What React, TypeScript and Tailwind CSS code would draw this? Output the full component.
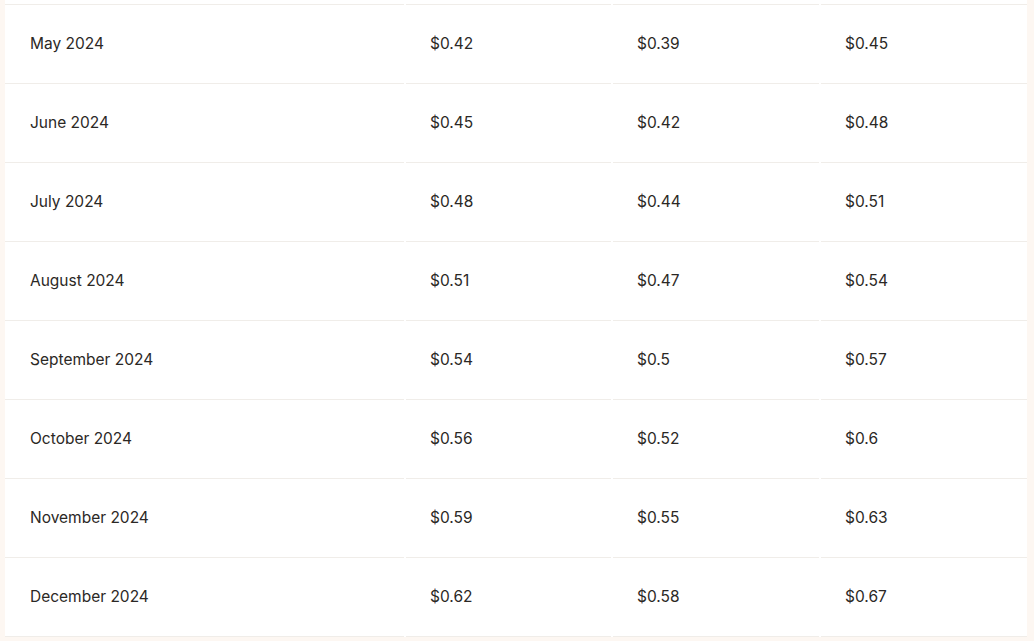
import React from 'react';

interface PriceRow {
  month: string;
  avg: string;
  low: string;
  high: string;
}

const rows: PriceRow[] = [
  { month: 'May 2024', avg: '$0.42', low: '$0.39', high: '$0.45' },
  { month: 'June 2024', avg: '$0.45', low: '$0.42', high: '$0.48' },
  { month: 'July 2024', avg: '$0.48', low: '$0.44', high: '$0.51' },
  { month: 'August 2024', avg: '$0.51', low: '$0.47', high: '$0.54' },
  { month: 'September 2024', avg: '$0.54', low: '$0.5', high: '$0.57' },
  { month: 'October 2024', avg: '$0.56', low: '$0.52', high: '$0.6' },
  { month: 'November 2024', avg: '$0.59', low: '$0.55', high: '$0.63' },
  { month: 'December 2024', avg: '$0.62', low: '$0.58', high: '$0.67' },
];

const Cell: React.FC<{ children: React.ReactNode; first?: boolean }> = ({ children, first }) => (
  <div
    className={`h-[79px] pb-px bg-white border-b border-[#f0ede9] flex items-center ${first ? 'pl-[25px]' : 'pl-6'}`}
  >
    {children}
  </div>
);

const App: React.FC = () => {
  return (
    <div
      className="h-[641px] w-[1034px] overflow-hidden bg-[#fdf7f2] text-[15.5px] text-[#2b2825]"
      style={{ fontFamily: 'Inter, "Liberation Sans", sans-serif' }}
    >
      <div className="pl-[5px] flex flex-col w-[1027px]">
        {/* tail of the row scrolled above the viewport */}
        <div className="grid grid-cols-[399px_205px_206px_206px] gap-x-[2px] bg-white">
          <div className="h-[5px] border-b border-[#f0ede9]" />
          <div className="h-[5px] border-b border-[#f0ede9]" />
          <div className="h-[5px] border-b border-[#f0ede9]" />
          <div className="h-[5px] border-b border-[#f0ede9]" />
        </div>
        {rows.map((r) => (
          <div key={r.month} className="grid grid-cols-[399px_205px_206px_206px] gap-x-[2px] bg-white">
            <Cell first>{r.month}</Cell>
            <Cell>{r.avg}</Cell>
            <Cell>{r.low}</Cell>
            <Cell>{r.high}</Cell>
          </div>
        ))}
      </div>
    </div>
  );
};

export default App;
